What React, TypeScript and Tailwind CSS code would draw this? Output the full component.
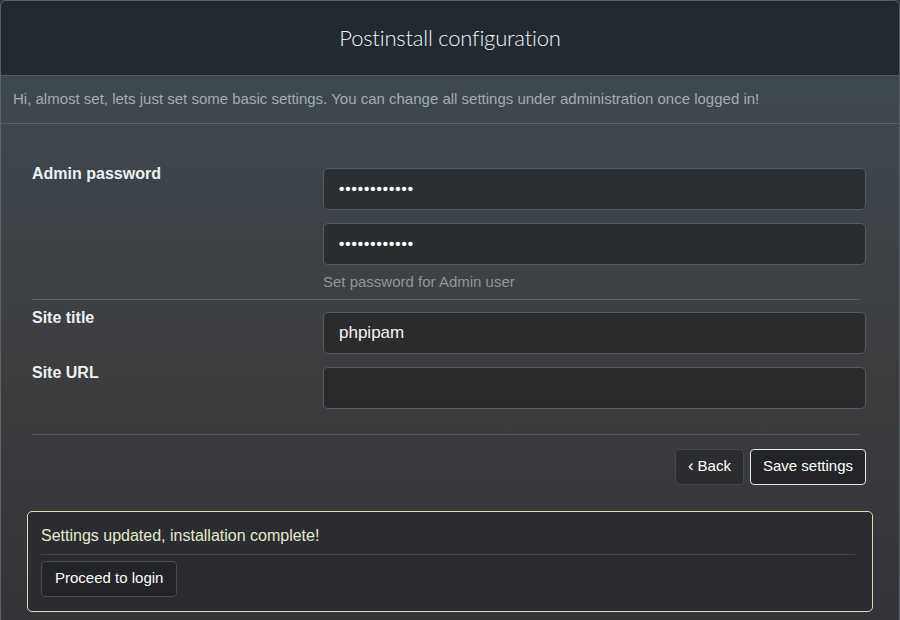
import React from 'react';

export default function App() {
  return (
    <div className="w-[900px] h-[620px] overflow-hidden bg-[#2f3338] font-['Liberation_Sans',Arial,sans-serif]">
      <div className="h-full rounded-t-md border border-[#5a6269] border-b-0 overflow-hidden bg-[linear-gradient(180deg,#3e4b53_0%,#3d4449_30%,#3d3d3f_60%,#333439_100%)]">
        {/* Header */}
        <div className="h-[75px] bg-[#222a31] border-b border-[#4f5b63] flex items-center justify-center">
          <h1 className="font-['Lato',sans-serif] font-light text-[22px] text-[#f2f4f5] tracking-[-0.2px] -mt-[2px]">
            Postinstall configuration
          </h1>
        </div>

        {/* Intro */}
        <div className="h-[48px] border-b border-[#56626a] flex items-center px-3">
          <p className="text-[15px] text-[#a4adb2]">
            Hi, almost set, lets just set some basic settings. You can change all settings under administration once logged in!
          </p>
        </div>

        {/* Form */}
        <div className="pl-[31px] pr-[33px] pt-[44px]">
          <div className="grid grid-cols-[291px_1fr] pb-[5px]">
            <label className="-mt-[6px] text-[16px] font-bold text-[#eef0f1]">Admin password</label>
            <div className="flex flex-col gap-[13px]">
              <Input value="••••••••••••" password />
              <Input value="••••••••••••" password />
              <span className="-mt-[7px] text-[15px] text-[#8e969b]">Set password for Admin user</span>
            </div>
          </div>
          <div className="h-px bg-[#5b6064] mr-[6px]" />
          <div className="grid grid-cols-[291px_1fr] pt-[12px] gap-y-[13px]">
            <label className="-mt-[6px] text-[16px] font-bold text-[#eef0f1]">Site title</label>
            <Input value="phpipam" />
            <label className="-mt-[6px] text-[16px] font-bold text-[#eef0f1]">Site URL</label>
            <Input value="" />
          </div>
          <div className="h-px bg-[#55585c] mt-[25px] mr-[6px]" />
          <div className="flex justify-end gap-[6px] mt-[14px]">
            <button className="h-[36px] px-[12px] rounded-[4px] bg-[#2c2d30] border border-[#45484c] text-[15px] text-white flex items-center gap-[4px]">
              <span className="text-[17px] leading-none -mt-[2px]">‹</span>Back
            </button>
            <button className="h-[36px] px-[12px] rounded-[4px] bg-[#222428] border border-[#dfe9ee] text-[15px] text-white">
              Save settings
            </button>
          </div>
        </div>

        {/* Alert */}
        <div className="mx-[26px] mt-[26px] rounded-[5px] border border-[#d3e0b4] bg-[#2b2c31] px-[13px] pt-[12px] pb-[14px]">
          <p className="text-[16px] text-[#e3ebc9]">Settings updated, installation complete!</p>
          <div className="h-px bg-[#45474b] mt-[6px] mb-[6px] mr-[4px]" />
          <button className="h-[36px] px-[13px] rounded-[4px] bg-[#232427] border border-[#4a4d51] text-[15px] text-white">
            Proceed to login
          </button>
        </div>
      </div>
    </div>
  );
}

function Input({ value, password }: { value: string; password?: boolean }) {
  return (
    <div className="h-[42px] rounded-[5px] border border-[#535c62] bg-[rgba(0,0,0,0.3)] flex items-center px-[15px]">
      <span className={password ? 'text-[15px] text-white tracking-[1px] font-bold' : 'text-[17px] text-[#f4f5f6]'}>
        {value}
      </span>
    </div>
  );
}
